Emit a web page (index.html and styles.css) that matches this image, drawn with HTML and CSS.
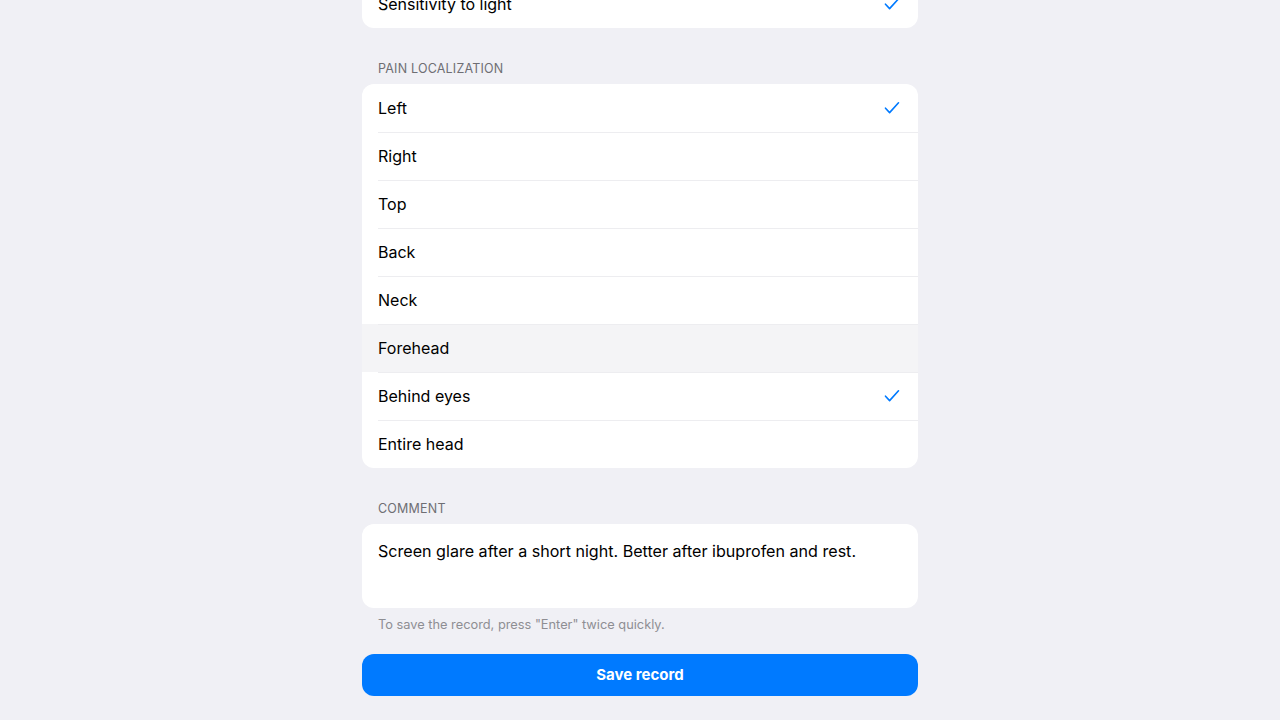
FILE: index.html
```html
<!DOCTYPE html>
<html>
<head>
    <meta charset="utf-8">
    <title>Record</title>
    <link rel="stylesheet" href="styles.css">
</head>
<body>
    <div class="page">
        <div class="card">
            <div class="row">
                <span>Sensitivity to light</span>
                <svg class="check" viewBox="0 0 16 14"><path d="M1.5 7.2 L5.6 11.6 L14.5 1.8"/></svg>
            </div>
        </div>

        <div class="section-title">Pain localization</div>
        <div class="card">
            <div class="row">
                <span>Left</span>
                <svg class="check" viewBox="0 0 16 14"><path d="M1.5 7.2 L5.6 11.6 L14.5 1.8"/></svg>
            </div>
            <div class="row"><span>Right</span></div>
            <div class="row"><span>Top</span></div>
            <div class="row"><span>Back</span></div>
            <div class="row"><span>Neck</span></div>
            <div class="row hover"><span>Forehead</span></div>
            <div class="row">
                <span>Behind eyes</span>
                <svg class="check" viewBox="0 0 16 14"><path d="M1.5 7.2 L5.6 11.6 L14.5 1.8"/></svg>
            </div>
            <div class="row"><span>Entire head</span></div>
        </div>

        <div class="section-title">Comment</div>
        <div class="card comment">Screen glare after a short night. Better after ibuprofen and rest.</div>
        <div class="note">To save the record, press "Enter" twice quickly.</div>

        <button class="save">Save record</button>
    </div>
</body>
</html>
```

FILE: styles.css
```css
* {
    margin: 0;
    padding: 0;
    box-sizing: border-box;
}
body {
    background: #f0f0f5;
    font-family: Inter, "Liberation Sans", sans-serif;
    color: #000;
}
.page {
    width: 556px;
    margin: -20px auto 0;
}
.card {
    background: #fff;
    border-radius: 12px;
    overflow: hidden;
}
.row {
    height: 48px;
    display: flex;
    align-items: center;
    justify-content: space-between;
    padding: 0 18px 0 16px;
    font-size: 16px;
    position: relative;
}
.row + .row::before {
    content: "";
    position: absolute;
    left: 16px;
    right: 0;
    top: 0;
    border-top: 1px solid #ededf0;
}
.row.hover {
    background: #f4f4f6;
}
.check {
    width: 16px;
    height: 14px;
    fill: none;
    stroke: #007aff;
    stroke-width: 1.6;
    stroke-linecap: round;
    stroke-linejoin: round;
}
.section-title {
    margin: 33px 16px 7px;
    font-size: 12.5px;
    line-height: 16px;
    color: #6e6e73;
    text-transform: uppercase;
    letter-spacing: 0.2px;
}
.comment {
    height: 84px;
    padding: 16px;
    font-size: 16.1px;
    line-height: 22px;
}
.note {
    margin: 9px 16px 0;
    font-size: 12.8px;
    line-height: 16px;
    color: #8e8e93;
}
.save {
    display: block;
    width: 100%;
    height: 42px;
    margin-top: 21px;
    padding-bottom: 2px;
    border: 0;
    border-radius: 12px;
    background: #007aff;
    color: #fff;
    font-family: Inter, "Liberation Sans", sans-serif;
    font-size: 15px;
    font-weight: 700;
}
```
